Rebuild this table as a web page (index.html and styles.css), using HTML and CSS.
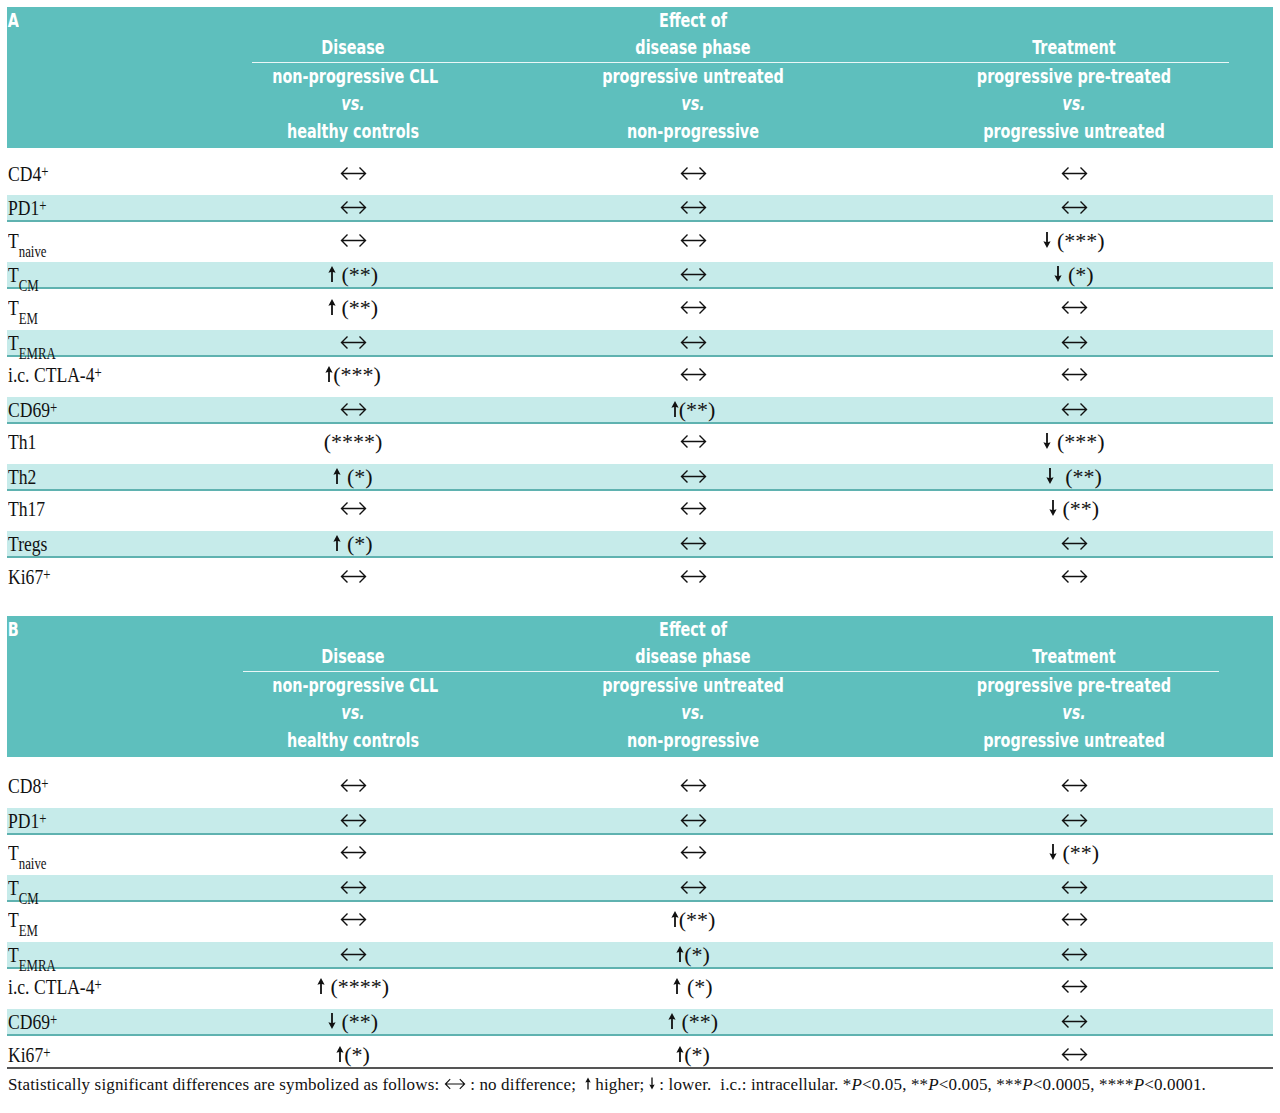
FILE: index.html
```html
<!DOCTYPE html>
<html>
<head>
<meta charset="utf-8">
<link rel="stylesheet" href="styles.css">
</head>
<body>
<svg class="defs" width="0" height="0" aria-hidden="true">
  <defs>
    <symbol id="lr" viewBox="0 0 27 15">
      <path d="M7.5 1.5 L1.5 7.5 L7.5 13.5 M1.5 7.5 L25.5 7.5 M19.5 1.5 L25.5 7.5 L19.5 13.5" fill="none" stroke="#111" stroke-width="1.4"/>
    </symbol>
    <symbol id="up" viewBox="0 0 8 16">
      <path d="M4 0 L7.6 6.8 L4.9 6 L4.9 16 L3.1 16 L3.1 6 L0.4 6.8 Z" fill="#111"/>
    </symbol>
    <symbol id="dn" viewBox="0 0 8 16">
      <path d="M4 16 L7.6 9.2 L4.9 10 L4.9 0 L3.1 0 L3.1 10 L0.4 9.2 Z" fill="#111"/>
    </symbol>
  </defs>
</svg>
<div class="page">

  <section class="panel">
    <div class="head">
      <div class="h-letter">A</div>
      <div class="h-c3 r1">Effect of</div>
      <div class="h-c2 r2">Disease</div>
      <div class="h-c3 r2">disease phase</div>
      <div class="h-c4 r2">Treatment</div>
      <div class="rule"></div>
      <div class="h-c2 r3">non-progressive CLL</div>
      <div class="h-c3 r3">progressive untreated</div>
      <div class="h-c4 r3">progressive pre-treated</div>
      <div class="h-c2 r4 vs">vs.</div>
      <div class="h-c3 r4 vs">vs.</div>
      <div class="h-c4 r4 vs">vs.</div>
      <div class="h-c2 r5">healthy controls</div>
      <div class="h-c3 r5">non-progressive</div>
      <div class="h-c4 r5">progressive untreated</div>
    </div>
    <div class="body body-a">
      <div class="row w"><div class="lab"><span class="lt">CD4<sup>+</sup></span></div><div class="c"><svg class="lr"><use href="#lr"/></svg></div><div class="c"><svg class="lr"><use href="#lr"/></svg></div><div class="c"><svg class="lr"><use href="#lr"/></svg></div></div>
      <div class="row t"><div class="lab"><span class="lt">PD1<sup>+</sup></span></div><div class="c"><svg class="lr"><use href="#lr"/></svg></div><div class="c"><svg class="lr"><use href="#lr"/></svg></div><div class="c"><svg class="lr"><use href="#lr"/></svg></div></div>
      <div class="row w"><div class="lab"><span class="lt">T<sub>naive</sub></span></div><div class="c"><svg class="lr"><use href="#lr"/></svg></div><div class="c"><svg class="lr"><use href="#lr"/></svg></div><div class="c"><svg class="ud"><use href="#dn"/></svg> (***)</div></div>
      <div class="row t"><div class="lab"><span class="lt">T<sub>CM</sub></span></div><div class="c"><svg class="ud"><use href="#up"/></svg> (**)</div><div class="c"><svg class="lr"><use href="#lr"/></svg></div><div class="c"><svg class="ud"><use href="#dn"/></svg> (*)</div></div>
      <div class="row w"><div class="lab"><span class="lt">T<sub>EM</sub></span></div><div class="c"><svg class="ud"><use href="#up"/></svg> (**)</div><div class="c"><svg class="lr"><use href="#lr"/></svg></div><div class="c"><svg class="lr"><use href="#lr"/></svg></div></div>
      <div class="row t"><div class="lab"><span class="lt">T<sub>EMRA</sub></span></div><div class="c"><svg class="lr"><use href="#lr"/></svg></div><div class="c"><svg class="lr"><use href="#lr"/></svg></div><div class="c"><svg class="lr"><use href="#lr"/></svg></div></div>
      <div class="row w"><div class="lab"><span class="lt">i.c. CTLA-4<sup>+</sup></span></div><div class="c"><svg class="ud"><use href="#up"/></svg>(***)</div><div class="c"><svg class="lr"><use href="#lr"/></svg></div><div class="c"><svg class="lr"><use href="#lr"/></svg></div></div>
      <div class="row t"><div class="lab"><span class="lt">CD69<sup>+</sup></span></div><div class="c"><svg class="lr"><use href="#lr"/></svg></div><div class="c"><svg class="ud"><use href="#up"/></svg>(**)</div><div class="c"><svg class="lr"><use href="#lr"/></svg></div></div>
      <div class="row w"><div class="lab"><span class="lt">Th1</span></div><div class="c">(****)</div><div class="c"><svg class="lr"><use href="#lr"/></svg></div><div class="c"><svg class="ud"><use href="#dn"/></svg> (***)</div></div>
      <div class="row t"><div class="lab"><span class="lt">Th2</span></div><div class="c"><svg class="ud"><use href="#up"/></svg> (*)</div><div class="c"><svg class="lr"><use href="#lr"/></svg></div><div class="c"><svg class="ud"><use href="#dn"/></svg> &nbsp;(**)</div></div>
      <div class="row w"><div class="lab"><span class="lt">Th17</span></div><div class="c"><svg class="lr"><use href="#lr"/></svg></div><div class="c"><svg class="lr"><use href="#lr"/></svg></div><div class="c"><svg class="ud"><use href="#dn"/></svg> (**)</div></div>
      <div class="row t"><div class="lab"><span class="lt">Tregs</span></div><div class="c"><svg class="ud"><use href="#up"/></svg> (*)</div><div class="c"><svg class="lr"><use href="#lr"/></svg></div><div class="c"><svg class="lr"><use href="#lr"/></svg></div></div>
      <div class="row w"><div class="lab"><span class="lt">Ki67<sup>+</sup></span></div><div class="c"><svg class="lr"><use href="#lr"/></svg></div><div class="c"><svg class="lr"><use href="#lr"/></svg></div><div class="c"><svg class="lr"><use href="#lr"/></svg></div></div>
    </div>
  </section>

  <section class="panel panel-b">
    <div class="head">
      <div class="h-letter">B</div>
      <div class="h-c3 r1">Effect of</div>
      <div class="h-c2 r2">Disease</div>
      <div class="h-c3 r2">disease phase</div>
      <div class="h-c4 r2">Treatment</div>
      <div class="rule rule-b"></div>
      <div class="h-c2 r3">non-progressive CLL</div>
      <div class="h-c3 r3">progressive untreated</div>
      <div class="h-c4 r3">progressive pre-treated</div>
      <div class="h-c2 r4 vs">vs.</div>
      <div class="h-c3 r4 vs">vs.</div>
      <div class="h-c4 r4 vs">vs.</div>
      <div class="h-c2 r5">healthy controls</div>
      <div class="h-c3 r5">non-progressive</div>
      <div class="h-c4 r5">progressive untreated</div>
    </div>
    <div class="body body-b">
      <div class="row w"><div class="lab"><span class="lt">CD8<sup>+</sup></span></div><div class="c"><svg class="lr"><use href="#lr"/></svg></div><div class="c"><svg class="lr"><use href="#lr"/></svg></div><div class="c"><svg class="lr"><use href="#lr"/></svg></div></div>
      <div class="row t"><div class="lab"><span class="lt">PD1<sup>+</sup></span></div><div class="c"><svg class="lr"><use href="#lr"/></svg></div><div class="c"><svg class="lr"><use href="#lr"/></svg></div><div class="c"><svg class="lr"><use href="#lr"/></svg></div></div>
      <div class="row w"><div class="lab"><span class="lt">T<sub>naive</sub></span></div><div class="c"><svg class="lr"><use href="#lr"/></svg></div><div class="c"><svg class="lr"><use href="#lr"/></svg></div><div class="c"><svg class="ud"><use href="#dn"/></svg> (**)</div></div>
      <div class="row t"><div class="lab"><span class="lt">T<sub>CM</sub></span></div><div class="c"><svg class="lr"><use href="#lr"/></svg></div><div class="c"><svg class="lr"><use href="#lr"/></svg></div><div class="c"><svg class="lr"><use href="#lr"/></svg></div></div>
      <div class="row w"><div class="lab"><span class="lt">T<sub>EM</sub></span></div><div class="c"><svg class="lr"><use href="#lr"/></svg></div><div class="c"><svg class="ud"><use href="#up"/></svg>(**)</div><div class="c"><svg class="lr"><use href="#lr"/></svg></div></div>
      <div class="row t"><div class="lab"><span class="lt">T<sub>EMRA</sub></span></div><div class="c"><svg class="lr"><use href="#lr"/></svg></div><div class="c"><svg class="ud"><use href="#up"/></svg>(*)</div><div class="c"><svg class="lr"><use href="#lr"/></svg></div></div>
      <div class="row w"><div class="lab"><span class="lt">i.c. CTLA-4<sup>+</sup></span></div><div class="c"><svg class="ud"><use href="#up"/></svg> (****)</div><div class="c"><svg class="ud"><use href="#up"/></svg> (*)</div><div class="c"><svg class="lr"><use href="#lr"/></svg></div></div>
      <div class="row t"><div class="lab"><span class="lt">CD69<sup>+</sup></span></div><div class="c"><svg class="ud"><use href="#dn"/></svg> (**)</div><div class="c"><svg class="ud"><use href="#up"/></svg> (**)</div><div class="c"><svg class="lr"><use href="#lr"/></svg></div></div>
      <div class="row w last"><div class="lab"><span class="lt">Ki67<sup>+</sup></span></div><div class="c"><svg class="ud"><use href="#up"/></svg>(*)</div><div class="c"><svg class="ud"><use href="#up"/></svg>(*)</div><div class="c"><svg class="lr"><use href="#lr"/></svg></div></div>
    </div>
  </section>

  <p class="foot">Statistically significant differences are symbolized as follows: <svg class="lr-s"><use href="#lr"/></svg> : no difference; &nbsp;<svg class="ud-s"><use href="#up"/></svg> higher; <svg class="ud-s"><use href="#dn"/></svg> : lower. &nbsp;i.c.: intracellular. *<i>P</i>&lt;0.05, **<i>P</i>&lt;0.005, ***<i>P</i>&lt;0.0005, ****<i>P</i>&lt;0.0001.</p>
</div>
</body>
</html>
```

FILE: styles.css
```css
* { box-sizing: border-box; }
html, body { margin: 0; padding: 0; background: #fff; }
.defs { position: absolute; width: 0; height: 0; overflow: hidden; }
.page { padding: 7px 7px 0 7px; width: 1280px; }

.panel { width: 1266px; }
.panel-b { margin-top: 18px; }

.head {
  background: #5ebfbd;
  color: #fff;
  font-family: "Liberation Sans Narrow", "DejaVu Sans Condensed", sans-serif;
  font-weight: bold;
  font-size: 20px;
  display: grid;
  grid-template-columns: 245px 202px 478px 284px 57px;
  grid-template-rows: 27px 27px 2px 27px 28px 28px;
  padding-bottom: 2px;
  line-height: 27px;
}
.head > div { text-align: center; white-space: nowrap; transform: scaleX(0.8); }
.head > .rule { transform: none; }
.h-letter { grid-column: 1; grid-row: 1; text-align: left !important; padding-left: 1px; line-height: 26px; transform-origin: left center; }
.h-c2 { grid-column: 2; }
.h-c3 { grid-column: 3; }
.h-c4 { grid-column: 4; }
.r1 { grid-row: 1; }
.r2 { grid-row: 2; }
.r3 { grid-row: 4; }
.r4 { grid-row: 5; }
.r5 { grid-row: 6; }
.vs { font-style: italic; }
.rule { grid-column: 2 / 6; grid-row: 3; height: 1px; margin-top: 1px; margin-right: 44px; background: #eaf7f7; }
.rule-b { margin-left: -9px; margin-right: 54px; }

.body-a { padding-top: 7px; }
.body-b { padding-top: 10px; }

.row {
  display: grid;
  grid-template-columns: 245px 202px 478px 284px 57px;
  font-family: "Liberation Serif", "Times New Roman", serif;
  font-size: 22px;
  line-height: 22px;
  color: #111;
  white-space: nowrap;
}
.row.w { height: 40.2px; padding-top: 7.5px; }
.row.t { height: 27px; padding-top: 2px; background: #c6ebea; border-bottom: 2px solid #5fb2b0; }
.row.last { height: 33px; border-bottom: 2px solid #555; }
.lab { padding-left: 1px; }
.lt { display: inline-block; transform: scaleX(0.8); transform-origin: left center; }
.lt sup { font-size: 16px; vertical-align: 4px; line-height: 0; }
.lt sub { font-size: 16px; vertical-align: -9px; line-height: 0; }
.c { text-align: center; }

svg.lr { width: 27px; height: 15px; vertical-align: 0px; }
svg.ud { width: 8px; height: 16px; vertical-align: 0px; }

.foot {
  margin: 6px 0 0 1px;
  font-family: "Liberation Serif", "Times New Roman", serif;
  font-size: 17px;
  letter-spacing: 0.15px;
  line-height: 20px;
  color: #111;
  white-space: nowrap;
}
svg.lr-s { width: 22px; height: 12px; vertical-align: 0px; }
svg.ud-s { width: 6px; height: 13px; vertical-align: 0px; }
```
